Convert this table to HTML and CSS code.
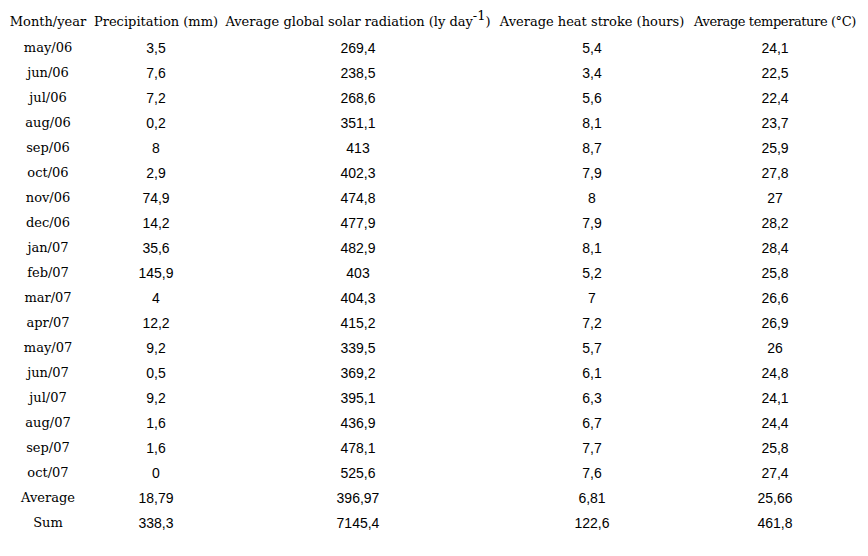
FILE: index.html
```html
<!DOCTYPE html>
<html>
<head>
<meta charset="utf-8">
<link rel="stylesheet" href="styles.css">
</head>
<body>
<table class="data">
<colgroup>
<col class="c1"><col class="c2"><col class="c3"><col class="c4"><col class="c5">
</colgroup>
<thead>
<tr><th>Month/year</th><th>Precipitation (mm)</th><th>Average global solar radiation (ly day<sup>-1</sup>)</th><th>Average heat stroke (hours)</th><th class="tight">Average temperature (°C)</th></tr>
</thead>
<tbody>
<tr><td class="lbl">may/06</td><td>3,5</td><td>269,4</td><td>5,4</td><td>24,1</td></tr>
<tr><td class="lbl">jun/06</td><td>7,6</td><td>238,5</td><td>3,4</td><td>22,5</td></tr>
<tr><td class="lbl">jul/06</td><td>7,2</td><td>268,6</td><td>5,6</td><td>22,4</td></tr>
<tr><td class="lbl">aug/06</td><td>0,2</td><td>351,1</td><td>8,1</td><td>23,7</td></tr>
<tr><td class="lbl">sep/06</td><td>8</td><td>413</td><td>8,7</td><td>25,9</td></tr>
<tr><td class="lbl">oct/06</td><td>2,9</td><td>402,3</td><td>7,9</td><td>27,8</td></tr>
<tr><td class="lbl">nov/06</td><td>74,9</td><td>474,8</td><td>8</td><td>27</td></tr>
<tr><td class="lbl">dec/06</td><td>14,2</td><td>477,9</td><td>7,9</td><td>28,2</td></tr>
<tr><td class="lbl">jan/07</td><td>35,6</td><td>482,9</td><td>8,1</td><td>28,4</td></tr>
<tr><td class="lbl">feb/07</td><td>145,9</td><td>403</td><td>5,2</td><td>25,8</td></tr>
<tr><td class="lbl">mar/07</td><td>4</td><td>404,3</td><td>7</td><td>26,6</td></tr>
<tr><td class="lbl">apr/07</td><td>12,2</td><td>415,2</td><td>7,2</td><td>26,9</td></tr>
<tr><td class="lbl">may/07</td><td>9,2</td><td>339,5</td><td>5,7</td><td>26</td></tr>
<tr><td class="lbl">jun/07</td><td>0,5</td><td>369,2</td><td>6,1</td><td>24,8</td></tr>
<tr><td class="lbl">jul/07</td><td>9,2</td><td>395,1</td><td>6,3</td><td>24,1</td></tr>
<tr><td class="lbl">aug/07</td><td>1,6</td><td>436,9</td><td>6,7</td><td>24,4</td></tr>
<tr><td class="lbl">sep/07</td><td>1,6</td><td>478,1</td><td>7,7</td><td>25,8</td></tr>
<tr><td class="lbl">oct/07</td><td>0</td><td>525,6</td><td>7,6</td><td>27,4</td></tr>
<tr><td class="lbl">Average</td><td>18,79</td><td>396,97</td><td>6,81</td><td>25,66</td></tr>
<tr><td class="lbl">Sum</td><td>338,3</td><td>7145,4</td><td>122,6</td><td>461,8</td></tr>
</tbody>
</table>
</body>
</html>
```
FILE: styles.css
```css
html, body {
  background: #fff;
}
body {
  margin: 8px;
  color: #000;
}
.data {
  border-collapse: collapse;
  table-layout: fixed;
  width: 850px;
}
.c1 { width: 80px; }
.c2 { width: 136px; }
.c3 { width: 268px; }
.c4 { width: 200px; }
.c5 { width: 166px; }
.data th {
  font-family: "DejaVu Serif", serif;
  font-weight: normal;
  font-size: 13px;
  white-space: nowrap;
  text-align: center;
  height: 26px;
  padding: 0 0 1px 0;
  vertical-align: middle;
}
.data th.tight {
  letter-spacing: -0.4px;
}
.data th sup {
  font-size: 13px;
  line-height: 0;
  vertical-align: 6px;
}
.data td {
  font-family: "Liberation Sans", Arial, sans-serif;
  font-size: 14px;
  text-align: center;
  height: 25px;
  padding: 0;
}
.data td.lbl {
  font-family: "DejaVu Serif", serif;
  font-size: 13px;
}
```
